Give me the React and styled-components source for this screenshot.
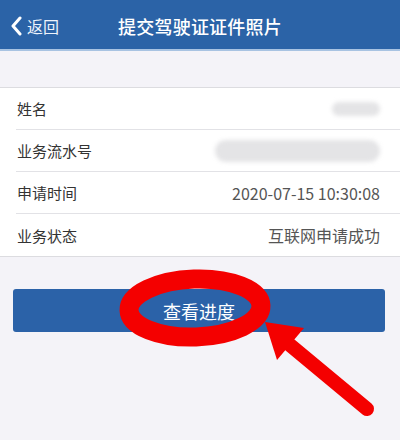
import React from "react";
import styled, { createGlobalStyle } from "styled-components";

const Global = createGlobalStyle`
  html, body { margin: 0; padding: 0; background: #ffffff; }
  body { font-family: "Noto Sans CJK SC", "Noto Sans", sans-serif; }
  * { box-sizing: border-box; }
`;

const Page = styled.div`
  position: relative;
  width: 400px;
  height: 440px;
  background: #f4f3f8;
  overflow: hidden;
`;

const Header = styled.header`
  height: 51px;
  background: #2b63a7;
  border-bottom: 2px solid #a8c3e2;
  display: grid;
  grid-template-columns: 80px 1fr 80px;
  align-items: center;
  color: #fff;
`;

const Back = styled.div`
  display: flex;
  align-items: center;
  gap: 5px;
  padding-left: 10px;
  padding-top: 2px;
  font-size: 16px;
  color: #eef3fb;
`;

const Title = styled.h1`
  margin: 0;
  text-align: center;
  font-size: 18px;
  font-weight: 500;
  padding-top: 2px;
  letter-spacing: 0.2px;
`;

const List = styled.div`
  margin-top: 36px;
  background: #fff;
  border-top: 1px solid #dcdce0;
  border-bottom: 1px solid #dcdce0;
  padding-left: 16px;
`;

const Row = styled.div`
  height: 42px;
  display: flex;
  align-items: center;
  justify-content: space-between;
  padding: 0 20px 0 1px;
  border-bottom: ${(p) => (p.$last ? "none" : "1px solid #e2e2e6")};
  font-size: 15px;
`;

const Label = styled.span`
  color: #333;
`;

const Value = styled.span`
  position: relative;
  color: #555;
  font-size: 16px;
  font-family: "Noto Sans CJK SC", "Liberation Sans", sans-serif;
`;

const Smudge = styled.span`
  display: block;
  width: ${(p) => p.$w}px;
  height: ${(p) => p.$h}px;
  border-radius: ${(p) => p.$h / 2}px;
  background: #e4e4e6;
  filter: blur(2px);
`;

const Footer = styled.div`
  padding: 32px 15px 0 13px;
`;

const Button = styled.button`
  width: 100%;
  height: 43px;
  border: none;
  border-radius: 3px;
  background: #2b62a8;
  color: #fff;
  font-family: inherit;
  font-size: 18px;
  padding: 0;
`;

const Overlay = styled.svg`
  position: absolute;
  left: 0;
  top: 0;
  pointer-events: none;
`;

const rows = [
  { label: "姓名", smudge: [48, 14] },
  { label: "业务流水号", smudge: [165, 22] },
  { label: "申请时间", value: "2020-07-15 10:30:08" },
  { label: "业务状态", value: "互联网申请成功" },
];

export default function App() {
  return (
    <Page>
      <Global />
      <Header>
        <Back>
          <svg width="12" height="20" viewBox="0 0 12 20">
            <path d="M10 2 L3 10 L10 18" fill="none" stroke="#fff" strokeWidth="3" strokeLinecap="round" strokeLinejoin="round" />
          </svg>
          返回
        </Back>
        <Title>提交驾驶证证件照片</Title>
        <div />
      </Header>
      <List>
        {rows.map((r, i) => (
          <Row key={r.label} $last={i === rows.length - 1}>
            <Label>{r.label}</Label>
            <Value>
              {r.value ? r.value : <Smudge $w={r.smudge[0]} $h={r.smudge[1]} />}
            </Value>
          </Row>
        ))}
      </List>
      <Footer>
        <Button>查看进度</Button>
      </Footer>
      <Overlay width="400" height="440" viewBox="0 0 400 440">
        <ellipse cx="195" cy="308" rx="66" ry="29" fill="none" stroke="#f40000" strokeWidth="19" transform="rotate(-2 195 308)" />
        <line x1="290" y1="345" x2="367" y2="409" stroke="#f40000" strokeWidth="14" strokeLinecap="round" />
        <polygon points="265,322 304,328 277,360" fill="#f40000" />
      </Overlay>
    </Page>
  );
}
